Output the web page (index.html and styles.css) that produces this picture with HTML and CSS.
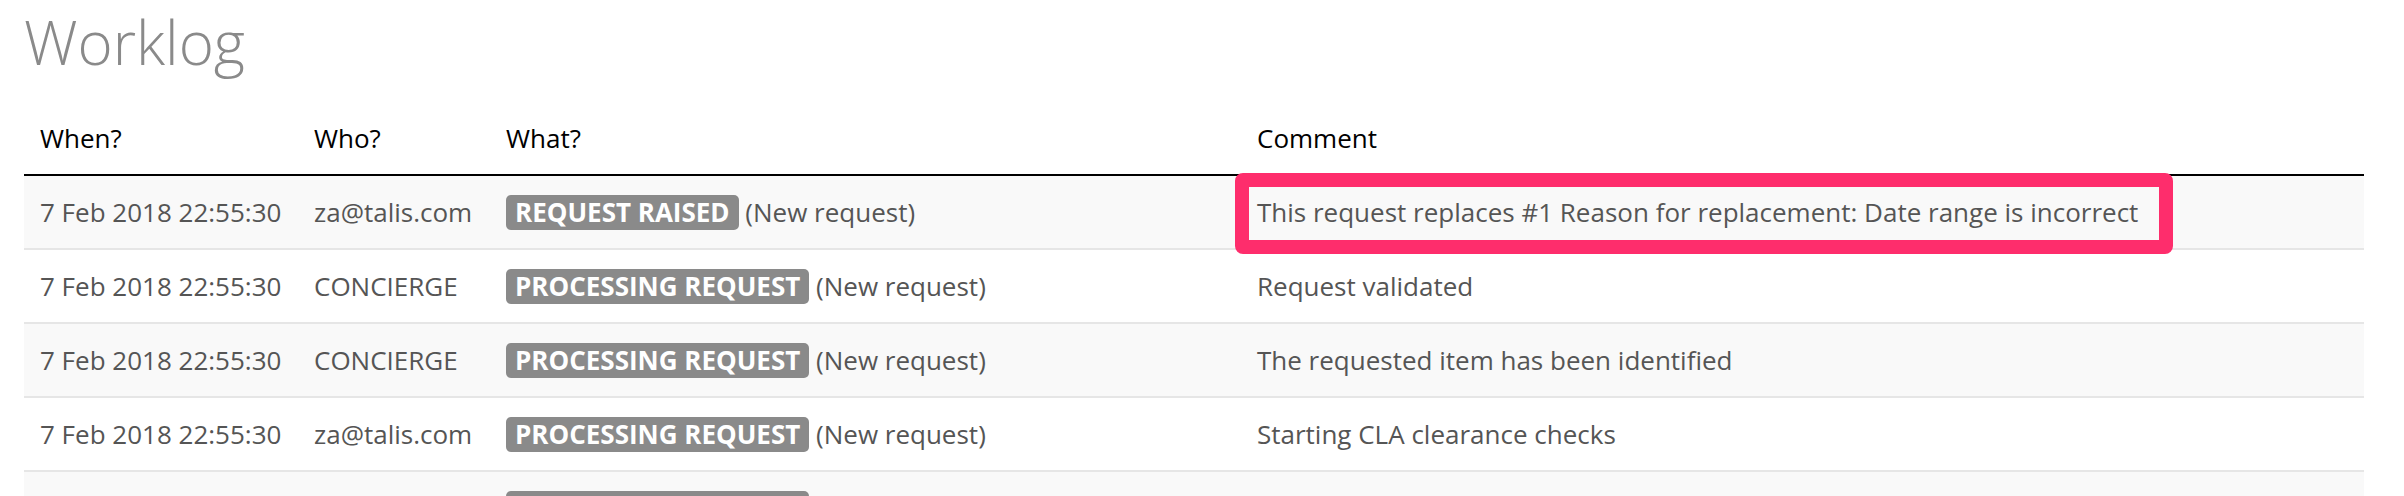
FILE: index.html
```html
<!DOCTYPE html>
<html lang="en">
<head>
<meta charset="utf-8">
<title>Worklog</title>
<link rel="stylesheet" href="styles.css">
</head>
<body>
<div class="page">
  <h1 class="title">Worklog</h1>
  <table class="worklog">
    <colgroup>
      <col class="col-when">
      <col class="col-who">
      <col class="col-what">
      <col class="col-comment">
    </colgroup>
    <thead>
      <tr>
        <th>When?</th>
        <th>Who?</th>
        <th>What?</th>
        <th>Comment</th>
      </tr>
    </thead>
    <tbody>
      <tr>
        <td>7 Feb 2018 22:55:30</td>
        <td>za@talis.com</td>
        <td><span class="badge">REQUEST RAISED</span> (New request)</td>
        <td class="highlighted">This request replaces #1 Reason for replacement: Date range is incorrect<span class="callout"></span></td>
      </tr>
      <tr>
        <td>7 Feb 2018 22:55:30</td>
        <td>CONCIERGE</td>
        <td><span class="badge">PROCESSING REQUEST</span> (New request)</td>
        <td>Request validated</td>
      </tr>
      <tr>
        <td>7 Feb 2018 22:55:30</td>
        <td>CONCIERGE</td>
        <td><span class="badge">PROCESSING REQUEST</span> (New request)</td>
        <td>The requested item has been identified</td>
      </tr>
      <tr>
        <td>7 Feb 2018 22:55:30</td>
        <td>za@talis.com</td>
        <td><span class="badge">PROCESSING REQUEST</span> (New request)</td>
        <td>Starting CLA clearance checks</td>
      </tr>
      <tr>
        <td>7 Feb 2018 22:55:30</td>
        <td>CONCIERGE</td>
        <td><span class="badge">PROCESSING REQUEST</span> (New request)</td>
        <td>CLA clearance checks passed</td>
      </tr>
    </tbody>
  </table>
</div>
</body>
</html>
```
FILE: styles.css
```css
html, body {
  margin: 0;
  padding: 0;
  background: #ffffff;
}

body {
  font-family: "Open Sans", "Liberation Sans", sans-serif;
  color: #555555;
}

.page {
  padding: 9px 40px 0 24px;
}

.title {
  margin: 0 0 27px 0;
  font-size: 60px;
  line-height: 66px;
  font-weight: 300;
  color: #8a8a8a;
}

.worklog {
  width: 2340px;
  border-collapse: collapse;
  table-layout: fixed;
  font-size: 26px;
  line-height: 40px;
}

.col-when { width: 274px; }
.col-who { width: 192px; }
.col-what { width: 751px; }
.col-comment { width: 1123px; }

.worklog th {
  text-align: left;
  font-weight: 400;
  color: #000000;
  padding: 16px 16px;
  border-bottom: 2px solid #000000;
  white-space: nowrap;
}

.worklog td {
  padding: 16px 16px;
  border-bottom: 2px solid #e6e6e6;
  white-space: nowrap;
  vertical-align: top;
}

.worklog tbody tr:nth-child(odd) td {
  background: #f9f9f9;
}

.badge {
  display: inline-block;
  background: #8a8a8a;
  color: #ffffff;
  font-weight: 700;
  line-height: 35px;
  padding: 0 9px;
  border-radius: 5px;
}

.highlighted {
  position: relative;
}

.callout {
  position: absolute;
  left: -6px;
  top: -3px;
  width: 910px;
  height: 53px;
  border: 14px solid #fe2d6c;
  border-radius: 8px;
  z-index: 2;
}
```
